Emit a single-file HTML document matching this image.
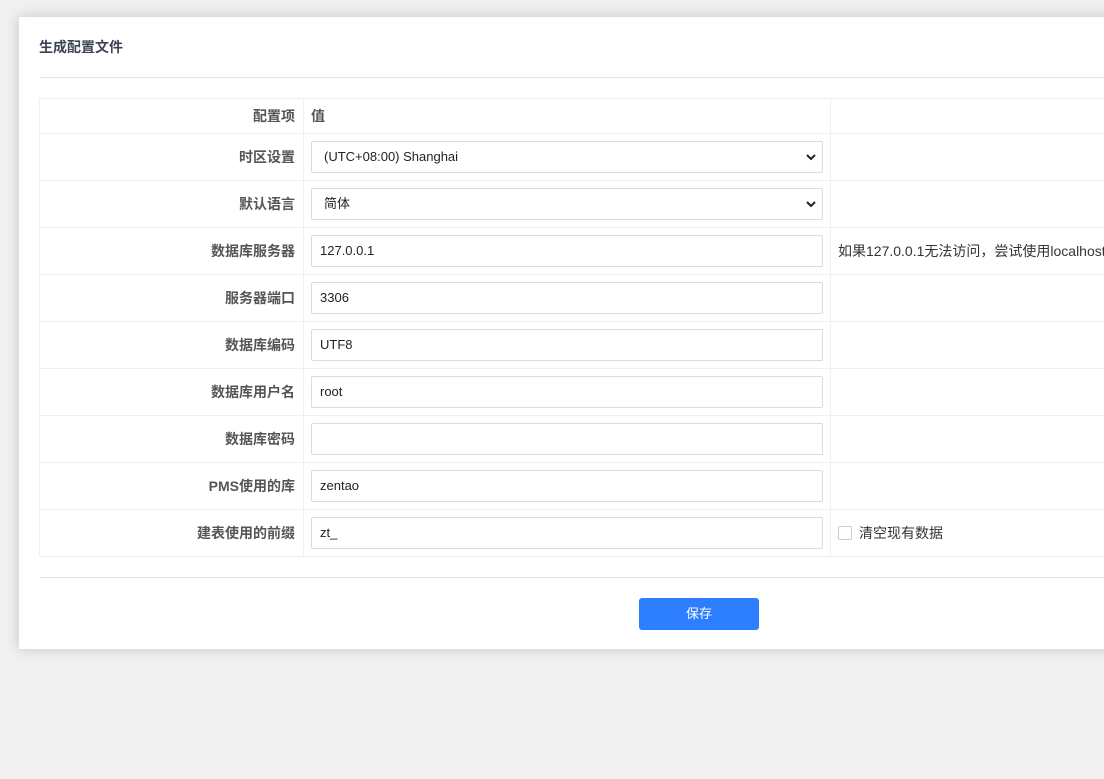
<!DOCTYPE html>
<html><head><meta charset="utf-8"><style>
body{margin:0;width:1104px;height:779px;background:#f0f0f0;overflow:hidden;font-family:"Liberation Sans","Noto Sans CJK SC",sans-serif;font-size:13px;color:#333;position:relative}
.panel{position:absolute;left:19px;top:17px;width:1200px;height:632px;background:#fff;box-shadow:0 0 12px rgba(0,0,0,.18)}
.title{position:absolute;left:39px;top:37px;font-weight:bold;font-size:14px;color:#3c4353}
.hr{position:absolute;left:39px;right:0;height:1px;background:#e5e5e5}
table{position:absolute;left:39px;top:98px;border-collapse:collapse;width:1100px;table-layout:fixed}
td{border:1px solid #f0f0f0;padding:0;height:46px;vertical-align:middle;font-size:14px}
tr.h td{height:34px;font-weight:bold}
td.l{text-align:right;padding-right:8px;font-weight:bold;color:#555}
td.v{padding-left:7px;padding-right:0}
td.n{padding-left:7px;color:#333}
.inp{width:512px;height:32px;border:1px solid #dcdcdc;border-radius:2px;box-sizing:border-box;line-height:30px;padding-left:8px;font-size:13px;color:#222;position:relative}
.inp.s{padding-left:12px}
.arr{position:absolute;right:6px;top:11px}
.cb{display:inline-block;width:12px;height:12px;border:1px solid #ccc;border-radius:2px;vertical-align:-2px;margin-right:7px}
.btn{position:absolute;left:639px;top:598px;width:120px;height:32px;background:#2e7fff;border-radius:3px;color:#fff;text-align:center;line-height:32px}
</style></head><body>
<div class="panel"></div>
<div class="title">生成配置文件</div>
<div class="hr" style="top:77px"></div>
<table>
<colgroup><col style="width:264px"><col style="width:527px"><col></colgroup>
<tr class="h"><td class="l">配置项</td><td class="v" style="color:#555">值</td><td></td></tr>
<tr><td class="l">时区设置</td><td class="v"><div class="inp s">(UTC+08:00) Shanghai<svg class="arr" width="10" height="8" viewBox="0 0 10 8"><path d="M1 2l4 4 4-4" stroke="#222" stroke-width="2" fill="none"/></svg></div></td><td></td></tr>
<tr><td class="l">默认语言</td><td class="v"><div class="inp s">简体<svg class="arr" width="10" height="8" viewBox="0 0 10 8"><path d="M1 2l4 4 4-4" stroke="#222" stroke-width="2" fill="none"/></svg></div></td><td></td></tr>
<tr><td class="l">数据库服务器</td><td class="v"><div class="inp">127.0.0.1</div></td><td class="n" style="white-space:nowrap;overflow:hidden">如果127.0.0.1无法访问，尝试使用localhost</td></tr>
<tr><td class="l">服务器端口</td><td class="v"><div class="inp">3306</div></td><td></td></tr>
<tr><td class="l">数据库编码</td><td class="v"><div class="inp">UTF8</div></td><td></td></tr>
<tr><td class="l">数据库用户名</td><td class="v"><div class="inp">root</div></td><td></td></tr>
<tr><td class="l">数据库密码</td><td class="v"><div class="inp"></div></td><td></td></tr>
<tr><td class="l">PMS使用的库</td><td class="v"><div class="inp">zentao</div></td><td></td></tr>
<tr><td class="l">建表使用的前缀</td><td class="v"><div class="inp">zt_</div></td><td class="n"><span class="cb"></span>清空现有数据</td></tr>
</table>
<div class="hr" style="top:577px"></div>
<div class="btn">保存</div>
</body></html>
